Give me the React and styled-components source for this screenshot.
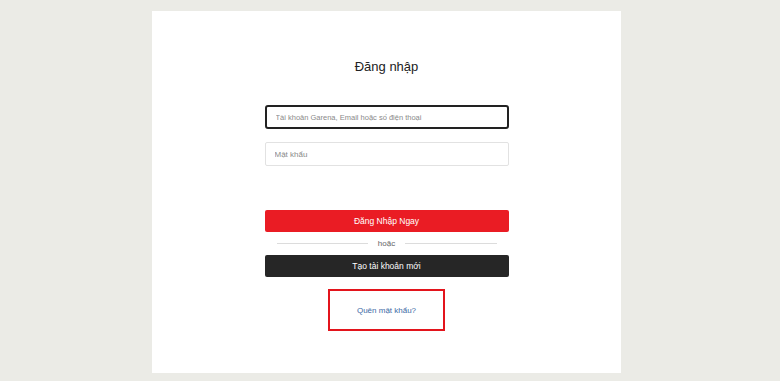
import React from "react";
import styled, { createGlobalStyle } from "styled-components";

const GlobalStyle = createGlobalStyle`
  html, body {
    margin: 0;
    padding: 0;
    background: #ebebe6;
    font-family: "Liberation Sans", Arial, sans-serif;
  }
`;

const Page = styled.div`
  padding: 11px 0 0 152px;
  height: 381px;
  box-sizing: border-box;
`;

const Card = styled.div`
  width: 469px;
  height: 362px;
  background: #fff;
  display: flex;
  flex-direction: column;
  align-items: center;
  box-sizing: border-box;
  padding-top: 48px;
`;

const Title = styled.h1`
  margin: 0;
  font-size: 13px;
  line-height: 16px;
  font-weight: normal;
  color: #222;
`;

const Form = styled.form`
  width: 244px;
  display: flex;
  flex-direction: column;
  margin-top: 30px;
`;

const Field = styled.input`
  box-sizing: border-box;
  width: 100%;
  height: 24px;
  margin: 0 0 13px;
  padding: 0 9px;
  font-family: inherit;
  font-size: ${(p) => (p.$active ? "7.5px" : "8px")};
  color: #333;
  background: #fff;
  outline: none;
  border: ${(p) => (p.$active ? "2px solid #222" : "1px solid #e2e2e2")};
  border-radius: ${(p) => (p.$active ? "3px" : "2px")};

  &::placeholder {
    color: #8a8a8a;
  }
`;

const Button = styled.button`
  box-sizing: border-box;
  width: 100%;
  height: 22px;
  border: none;
  border-radius: 2px;
  font-family: inherit;
  font-size: 8.5px;
  color: #fff;
  background: ${(p) => (p.$dark ? "#262626" : "#ea1c24")};
  cursor: pointer;
  margin-top: ${(p) => p.$top || 0}px;
`;

const Divider = styled.div`
  height: 23px;
  display: flex;
  align-items: center;
  gap: 10px;
  padding: 0 12px;
  font-size: 8px;
  color: #666;

  &::before,
  &::after {
    content: "";
    flex: 1;
    height: 1px;
    background: #dcdcdc;
  }
`;

const ForgotBox = styled.div`
  box-sizing: border-box;
  width: 117px;
  height: 42px;
  margin-top: 12px;
  border: 2px solid #e3141c;
  display: flex;
  align-items: center;
  justify-content: center;
`;

const ForgotLink = styled.a`
  font-size: 8px;
  color: #3d6aa6;
  text-decoration: none;
  cursor: pointer;
`;

export default function App() {
  return (
    <>
      <GlobalStyle />
      <Page>
        <Card>
          <Title>Đăng nhập</Title>
          <Form onSubmit={(e) => e.preventDefault()}>
            <Field $active placeholder="Tài khoản Garena, Email hoặc số điện thoại" />
            <Field type="password" placeholder="Mật khẩu" />
            <Button type="submit" $top={31}>Đăng Nhập Ngay</Button>
            <Divider>hoặc</Divider>
            <Button type="button" $dark>Tạo tài khoản mới</Button>
          </Form>
          <ForgotBox>
            <ForgotLink>Quên mật khẩu?</ForgotLink>
          </ForgotBox>
        </Card>
      </Page>
    </>
  );
}
